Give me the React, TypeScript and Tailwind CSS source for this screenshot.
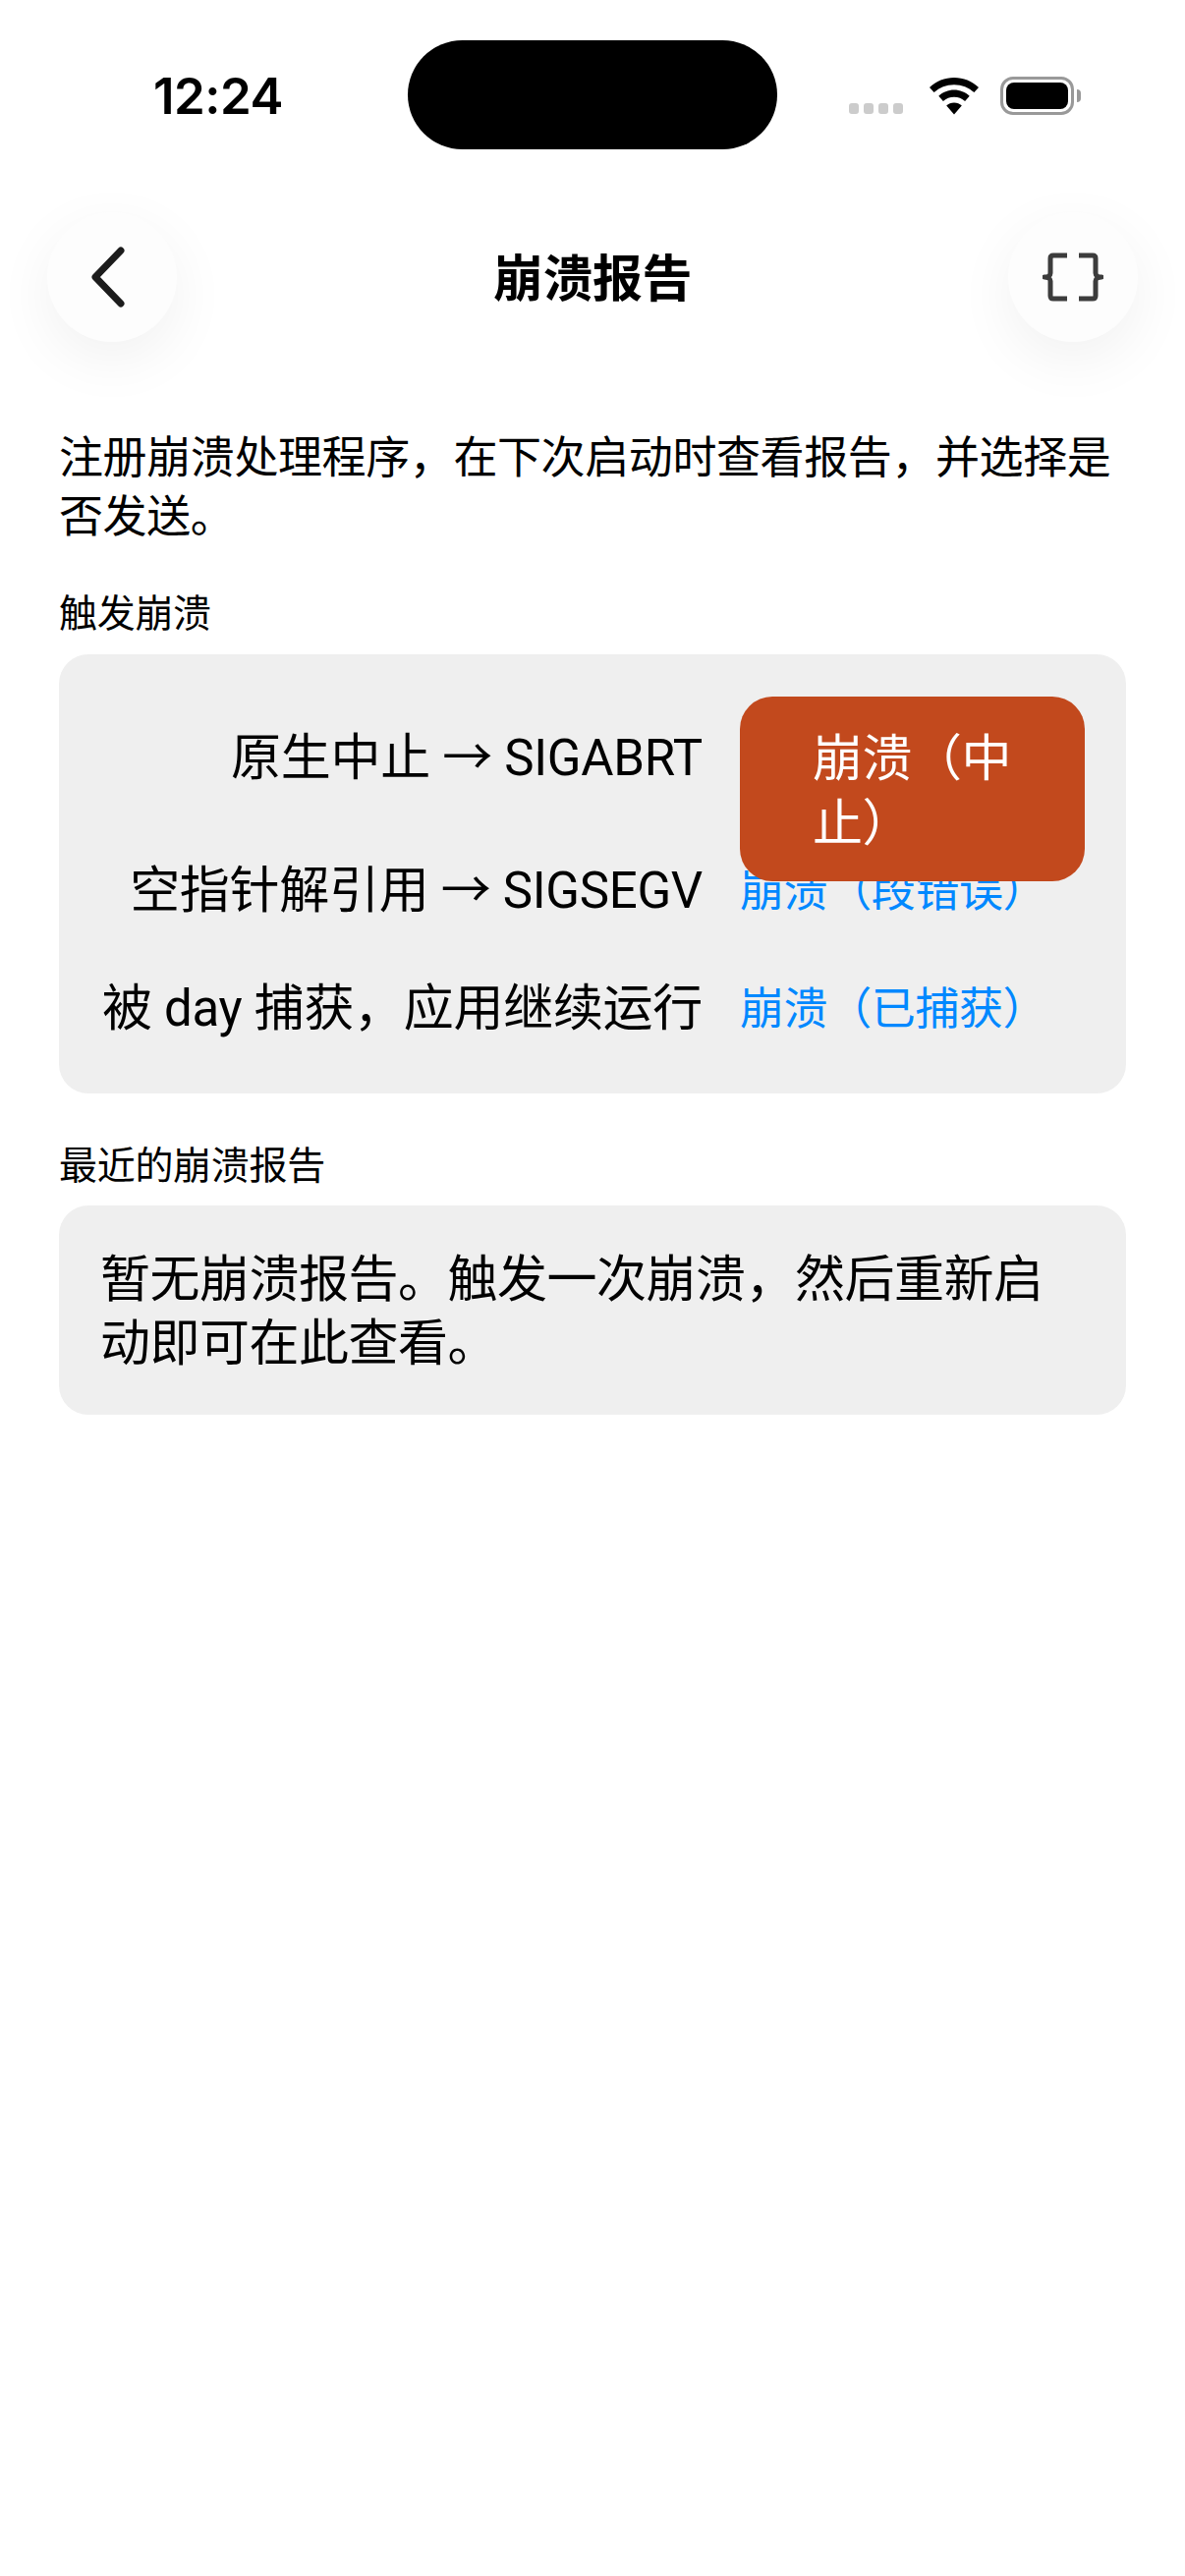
import React from "react";

const rowLabel = "w-[655px] shrink-0 text-right text-[51px] leading-[66px] text-black whitespace-nowrap font-['Roboto','Noto_Sans_CJK_SC',sans-serif] tracking-[-0.3px]";
const linkBtn = "ml-[38px] text-[45px] leading-[54px] text-[#0088ff] whitespace-nowrap tracking-[-0.4px]";

function Wifi() {
  return (
    <svg width="52" height="38" viewBox="0 0 52 38" fill="#000">
      <path d="M26 0C16.5 0 7.8 3.7 1 9.9l4.6 5.2C11 10.2 18.1 7.2 26 7.2s15 3 20.4 7.9l4.6-5.2C44.2 3.7 35.5 0 26 0z" />
      <path d="M26 12.6c-6 0-11.5 2.3-15.7 6.1l4.6 5.2c3-2.6 6.900-4.200 11.100-4.200s8.100 1.600 11.100 4.200l4.600-5.200C37.500 14.900 32 12.600 26 12.600z" />
      <path d="M26 25.400c-3 0-5.700 1.100-7.800 3L26 37.500l7.800-9.100c-2.100-1.900-4.800-3-7.800-3z" />
    </svg>
  );
}

function Battery() {
  return (
    <div className="flex items-center">
      <div className="w-[75px] h-[39px] rounded-[13px] border-[3.500px] border-[#999999] p-[3px]">
        <div className="w-full h-full rounded-[8px] bg-black" />
      </div>
      <div className="ml-[3px] w-[4px] h-[13px] rounded-r-full bg-[#999999]" />
    </div>
  );
}

function CircleButton({ children }: { children: React.ReactNode }) {
  return (
    <div className="w-[132px] h-[132px] rounded-full bg-[#fdfdfd] flex items-center justify-center shadow-[0_18px_60px_rgba(0,0,0,0.06)]">
      {children}
    </div>
  );
}

export default function App() {
  return (
    <div className="w-[1206px] h-[2622px] bg-white overflow-hidden font-['Inter','Noto_Sans_CJK_SC',sans-serif]">
      {/* status bar */}
      <div className="h-[216px] pt-[41px] flex items-start">
        <div className="w-[415px] pl-[156px] pt-[29px] text-[51px] leading-[56px] font-semibold text-black tracking-[-0.5px]">
          12:24
        </div>
        <div className="w-[376px] h-[111px] rounded-[56px] bg-black" />
        <div className="flex items-end ml-[73px] pt-[37px]">
          <div className="flex gap-[5px] mb-[1px]">
            {[0, 1, 2, 3].map((i) => (
              <div key={i} className="w-[10px] h-[11px] rounded-[3px] bg-[#cccccc]" />
            ))}
          </div>
          <div className="ml-[26px]">
            <Wifi />
          </div>
          <div className="ml-[21px]">
            <Battery />
          </div>
        </div>
      </div>

      {/* nav */}
      <div className="flex items-center justify-between px-[48px]">
        <CircleButton>
          <svg width="40" height="62" viewBox="0 0 40 62" fill="none" stroke="#1c1c1c" strokeWidth="7" strokeLinecap="round" strokeLinejoin="round" className="-ml-[9px]">
            <path d="M33 4L7 31l26 27" />
          </svg>
        </CircleButton>
        <div className="pt-[4px] text-[51px] leading-[66px] font-semibold text-black tracking-[-0.5px]">崩溃报告</div>
        <CircleButton>
          <svg width="62" height="50" viewBox="0 0 62 50" fill="none" stroke="#3c3c3c" strokeWidth="5" strokeLinejoin="round">
            <path d="M25 3H11c-2 0-3 1-3 3v15c0 2-2 4-6 4 4 0 6 2 6 4v15c0 2 1 3 3 3h14" />
            <path d="M37 3h14c2 0 3 1 3 3v15c0 2 2 4 6 4-4 0-6 2-6 4v15c0 2-1 3-3 3H37" />
          </svg>
        </CircleButton>
      </div>

      {/* content */}
      <div className="px-[60px] pt-[88px]">
        <p className="text-[45px] leading-[60px] text-black tracking-[-0.4px]">
          注册崩溃处理程序，在下次启动时查看报告，并选择是否发送。
        </p>

        <div className="mt-[43px] text-[39px] leading-[50px] text-black tracking-[-0.3px]">触发崩溃</div>
        <div className="mt-[17px] h-[447px] rounded-[30px] bg-[#efefef] pt-[43px]">
          <div className="h-[138px] flex items-start">
            <div className={`${rowLabel} pt-[30px]`}>原生中止 → SIGABRT</div>
            <div className="relative z-10 ml-[38px] w-[351px] h-[188px] shrink-0 rounded-[33px] bg-[#c2491d] pl-[74px] pr-[70px] pt-[30px] text-[51px] leading-[66px] text-white tracking-[-0.5px]">
              崩溃（中止）
            </div>
          </div>
          <div className="h-[120px] flex items-center">
            <div className={rowLabel}>空指针解引用 → SIGSEGV</div>
            <div className={linkBtn}>崩溃（段错误）</div>
          </div>
          <div className="h-[120px] flex items-center">
            <div className={rowLabel}>被 day 捕获，应用继续运行</div>
            <div className={linkBtn}>崩溃（已捕获）</div>
          </div>
        </div>

        <div className="mt-[48px] text-[39px] leading-[50px] text-black tracking-[-0.3px]">最近的崩溃报告</div>
        <div className="mt-[16px] rounded-[30px] bg-[#efefef] px-[42px] pt-[42px] pb-[41px] text-[51px] leading-[65px] text-black tracking-[-0.5px]">
          暂无崩溃报告。触发一次崩溃，然后重新启动即可在此查看。
        </div>
      </div>
    </div>
  );
}
